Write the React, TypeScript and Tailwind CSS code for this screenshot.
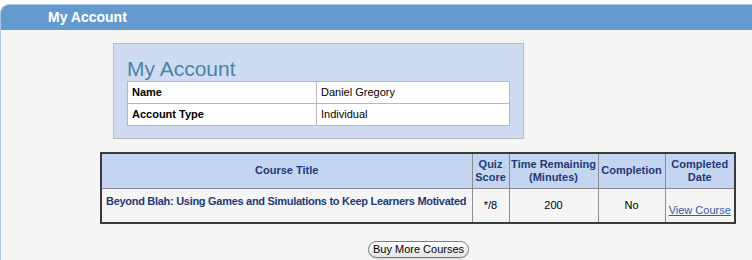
export default function App() {
  const font = { fontFamily: '"Liberation Sans", Arial, sans-serif' };

  return (
    <div className="h-[260px] w-[752px] overflow-hidden bg-white pt-[4px]" style={font}>
      <div className="h-[256px] rounded-tl-[9px] border-l border-t border-[#a9c6e6] bg-[#f5f5f5]">
        <div className="flex h-[25px] items-center rounded-tl-[8px] bg-[#659acf] pl-[47px] text-[14px] font-bold text-white">
          My Account
        </div>

        <div className="ml-[112px] mt-[13px] h-[96px] w-[411px] border border-[#bcbcbc] bg-[#cfdbf1] px-[13px] pt-[12px]">
          <h1 className="text-[21px] leading-[25px] text-[#4a84a6]">My Account</h1>
          <table className="w-full table-fixed border-collapse border border-[#8f8f8f] bg-white text-[11px] text-black">
            <tbody>
              <tr className="h-[22px]">
                <td className="w-[189px] border border-[#b8b8b8] px-[4px] font-bold">Name</td>
                <td className="border border-[#b8b8b8] px-[4px]">Daniel Gregory</td>
              </tr>
              <tr className="h-[22px]">
                <td className="border border-[#b8b8b8] px-[4px] font-bold">Account Type</td>
                <td className="border border-[#b8b8b8] px-[4px]">Individual</td>
              </tr>
            </tbody>
          </table>
        </div>

        <table className="ml-[99px] mt-[13px] w-[636px] table-fixed border-collapse border-2 border-[#3a3a3a] text-[11px] font-bold text-[#1e3a74]">
          <thead>
            <tr className="h-[35px] bg-[#c4d5f1] leading-[13px]">
              <th className="w-[371px] border border-[#8c8c8c]">Course Title</th>
              <th className="w-[37px] border border-[#8c8c8c]">
                Quiz
                <br />
                Score
              </th>
              <th className="w-[89px] border border-[#8c8c8c]">
                Time Remaining
                <br />
                (Minutes)
              </th>
              <th className="w-[67px] border border-[#8c8c8c]">Completion</th>
              <th className="border border-[#8c8c8c]">
                Completed
                <br />
                Date
              </th>
            </tr>
          </thead>
          <tbody>
            <tr className="h-[35px] bg-[#f5f5f5]">
              <td className="whitespace-nowrap border border-[#8c8c8c] pl-[4px] pt-[4px] align-top tracking-[-0.29px]">
                Beyond Blah: Using Games and Simulations to Keep Learners Motivated
              </td>
              <td className="border border-[#8c8c8c] text-center font-normal text-black">*/8</td>
              <td className="border border-[#8c8c8c] text-center font-normal text-black">200</td>
              <td className="border border-[#8c8c8c] text-center font-normal text-black">No</td>
              <td className="border border-[#8c8c8c] pb-[4px] text-center align-bottom font-normal">
                <a href="#" className="text-[#2d5fa0] underline">
                  View Course
                </a>
              </td>
            </tr>
          </tbody>
        </table>

        <div className="ml-[367px] mt-[17px] flex">
          <button className="h-[17px] w-[101px] rounded-full border border-[#7a7a7a] bg-gradient-to-b from-white to-[#e4e4e4] text-[11px] leading-[15px] text-black shadow-[0_1px_1px_rgba(0,0,0,0.15)]">
            Buy More Courses
          </button>
        </div>
      </div>
    </div>
  );
}
